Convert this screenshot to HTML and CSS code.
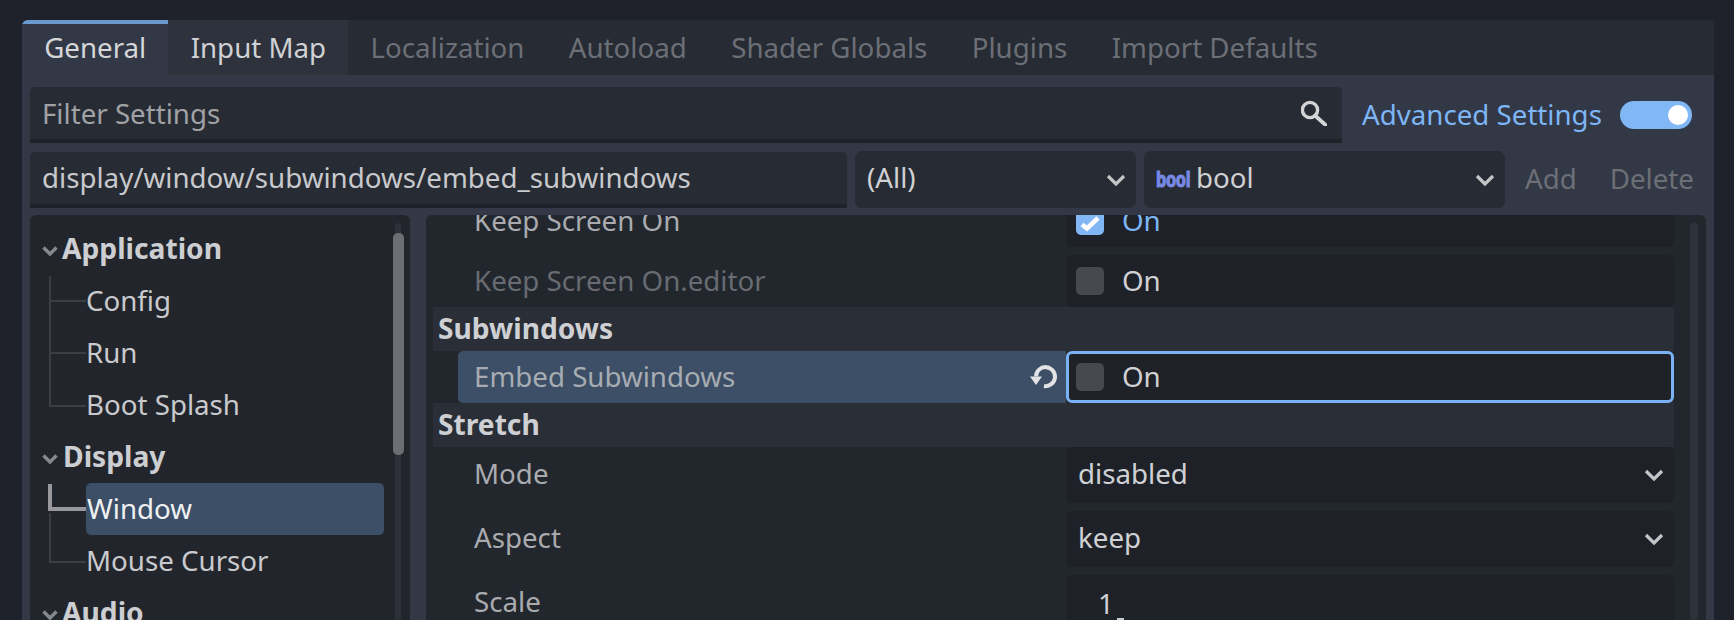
FILE: index.html
```html
<!DOCTYPE html>
<html lang="en">
<head>
<meta charset="utf-8">
<title>Project Settings</title>
<link rel="stylesheet" href="styles.css">
</head>
<body>
<main class="panel">
  <nav class="tabs">
    <span class="tab active">General</span>
    <span class="tab open">Input Map</span>
    <span class="tab">Localization</span>
    <span class="tab">Autoload</span>
    <span class="tab">Shader Globals</span>
    <span class="tab">Plugins</span>
    <span class="tab">Import Defaults</span>
  </nav>
  <div class="body">
    <div class="bar bar-filter">
      <div class="field filter">
        <span class="placeholder">Filter Settings</span>
        <svg class="search" viewBox="0 0 26 26"><circle cx="9" cy="10" r="7.6" fill="none" stroke="#d4d4d4" stroke-width="3.4"/><path d="M14 15.500l10.500 9.500" stroke="#d4d4d4" stroke-width="3.8" stroke-linecap="round"/></svg>
      </div>
      <span class="advanced">Advanced Settings</span>
      <span class="toggle"><span class="knob"></span></span>
    </div>
    <div class="bar bar-path">
      <div class="field path"><span class="path-text">display/window/subwindows/embed_subwindows</span></div>
      <div class="select all"><span class="select-text">(All)</span><svg class="chev" viewBox="0 0 20 12"><path d="M2 2l8 8 8-8" fill="none" stroke="#c4c5c7" stroke-width="3.2"/></svg></div>
      <div class="select type"><span class="type-slot"><span class="type-icon">bool</span></span><span class="type-name select-text">bool</span><svg class="chev" viewBox="0 0 20 12"><path d="M2 2l8 8 8-8" fill="none" stroke="#c4c5c7" stroke-width="3.2"/></svg></div>
      <span class="action add">Add</span>
      <span class="action">Delete</span>
    </div>
    <div class="main">
      <aside class="tree">
        <div class="node head"><svg class="arrow" viewBox="0 0 16 10"><path d="M1.5 1.5L8 8l6.5-6.5" fill="none" stroke="#85888d" stroke-width="3.4"/></svg><b>Application</b></div>
        <div class="node"><span class="branch mid"></span><span class="leaf">Config</span></div>
        <div class="node"><span class="branch mid"></span><span class="leaf">Run</span></div>
        <div class="node"><span class="branch end"></span><span class="leaf">Boot Splash</span></div>
        <div class="node head"><svg class="arrow" viewBox="0 0 16 10"><path d="M1.5 1.5L8 8l6.5-6.5" fill="none" stroke="#85888d" stroke-width="3.4"/></svg><b class="nudge">Display</b></div>
        <div class="node"><span class="branch sel"></span><span class="leaf selected">Window</span></div>
        <div class="node"><span class="branch end"></span><span class="leaf">Mouse Cursor</span></div>
        <div class="node head"><svg class="arrow" viewBox="0 0 16 10"><path d="M1.5 1.5L8 8l6.5-6.5" fill="none" stroke="#85888d" stroke-width="3.4"/></svg><b>Audio</b></div>
        <div class="scroll tree-scroll"><span class="grab"></span></div>
      </aside>
      <section class="props">
        <div class="prop first">
          <span class="label">Keep Screen On</span>
          <div class="value check"><span class="box on"><svg viewBox="0 0 28 28"><path d="M6 17.500l5 4 11-10.500" fill="none" stroke="#fff" stroke-width="4.500"/></svg></span><span class="on-text blue">On</span></div>
        </div>
        <div class="prop">
          <span class="label dim">Keep Screen On.editor</span>
          <div class="value check"><span class="box"></span><span class="on-text">On</span></div>
        </div>
        <h3 class="section">Subwindows</h3>
        <div class="prop focus">
          <div class="label hl"><span class="hl-text">Embed Subwindows</span><svg class="reset" viewBox="0 0 28 26"><path d="M6 12.500A9.500 9.500 0 1 1 14 22" fill="none" stroke="#e2e3e4" stroke-width="4"/><path d="M0 12.500H12L6 21z" fill="#e2e3e4"/></svg></div>
          <div class="value check ring"><span class="box"></span><span class="on-text">On</span></div>
        </div>
        <h3 class="section">Stretch</h3>
        <div class="prop tall">
          <span class="label">Mode</span>
          <div class="value drop"><span class="select-text">disabled</span><svg class="chev" viewBox="0 0 20 12"><path d="M2 2l8 8 8-8" fill="none" stroke="#c4c5c7" stroke-width="3.2"/></svg></div>
        </div>
        <div class="prop tall">
          <span class="label">Aspect</span>
          <div class="value drop"><span class="select-text">keep</span><svg class="chev" viewBox="0 0 20 12"><path d="M2 2l8 8 8-8" fill="none" stroke="#c4c5c7" stroke-width="3.2"/></svg></div>
        </div>
        <div class="prop">
          <span class="label low">Scale</span>
          <div class="value number"><span>1</span><span class="tick"></span></div>
        </div>
        <div class="scroll props-scroll"></div>
      </section>
    </div>
  </div>
</main>
</body>
</html>
```
FILE: styles.css
```css
* { box-sizing: border-box; }
html, body { height: 100%; }
body {
  margin: 0;
  height: 620px;
  overflow: hidden;
  padding: 20px 20px 0 22px;
  background: #1f222a;
  font-family: "Noto Sans", sans-serif;
  font-size: 27.7px;
  color: #d0d1d4;
}
.panel {
  height: 600px;
  display: flex;
  flex-direction: column;
  background: #323845;
  border-radius: 6px 6px 0 0;
  overflow: hidden;
}
.tabs {
  display: flex;
  height: 55px;
  flex: none;
  background: #272b34;
}
.tab {
  padding: 4px 22.2px 0;
  line-height: 47px;
  color: #6c6f76;
  white-space: nowrap;
}
.tab.active {
  background: #323845;
  border-top: 4px solid #6999cf;
  padding-top: 0;
  color: #d5d6d9;
}
.tab.open { background: #2d323d; color: #d0d1d4; }
.body {
  flex: 1;
  min-height: 0;
  display: flex;
  flex-direction: column;
  padding: 12px 8px 0;
}
.bar { display: flex; align-items: center; flex: none; }
.bar-filter { height: 56px; }
.bar-path { height: 57px; margin-top: 8px; gap: 8px; }
.field {
  height: 56px;
  background: #272b33;
  border-bottom: 4px solid #1f2229;
  border-radius: 5px 5px 0 0;
  display: flex;
  align-items: center;
  padding: 0 12px;
}
.filter { width: 1312px; justify-content: space-between; }
.placeholder { color: #a0a2a6; }
.search { width: 26px; height: 26px; margin-right: 3px; }
.advanced { margin-left: 20px; padding-bottom: 2px; color: #7db5f6; white-space: nowrap; }
.toggle {
  margin-left: 18px;
  width: 72px;
  height: 28px;
  background: #82b7f6;
  border-radius: 14px;
  display: flex;
  align-items: center;
  justify-content: flex-end;
  padding-right: 4px;
}
.knob { width: 20px; height: 20px; border-radius: 50%; background: #fff; }
.path { width: 817px; color: #c8c9cc; white-space: nowrap; }
.path-text { padding-bottom: 2px; }
.select {
  height: 57px;
  background: #272b33;
  border-radius: 7px;
  display: flex;
  align-items: center;
  padding: 0 10px 0 12px;
}
.select-text { padding-bottom: 5px; }
.all { width: 281px; justify-content: space-between; }
.type { width: 361px; }
.chev { width: 20px; height: 12px; flex: none; }
.type .chev { margin-left: auto; }
.type-slot { width: 32px; margin-right: 8px; margin-bottom: 5px; flex: none; line-height: 1; white-space: nowrap; }
.type-icon {
  display: inline-block;
  font-size: 21px;
  font-weight: 700;
  letter-spacing: -0.5px;
  color: #7789e4;
  -webkit-text-stroke: 1.1px #7789e4;
  transform: scaleX(0.78);
  transform-origin: left center;
}
.type-name { color: #cfd0d3; }
.action { color: #6c6f76; margin-left: 12px; padding-bottom: 3px; }
.action.add { margin-left: 12px; margin-right: 13px; }
.main {
  flex: 1;
  min-height: 0;
  display: flex;
  gap: 16px;
  margin-top: 7px;
}
.tree, .props {
  position: relative;
  overflow: hidden;
  border-radius: 6px 6px 0 0;
}
.tree {
  width: 380px;
  flex: none;
  background: #22262c;
  padding-top: 9px;
}
.node {
  height: 52px;
  display: flex;
  align-items: center;
  white-space: nowrap;
  padding-left: 12px;
}
.head b { font-size: 28.2px; font-weight: 700; color: #cdced2; padding-bottom: 4px; }
.head .nudge { margin-left: 1px; }
.arrow { width: 16px; height: 10px; margin-right: 4px; flex: none; margin-top: 2px; }
.branch {
  width: 37px;
  height: 52px;
  margin-left: 7px;
  flex: none;
  --line: #3a3e45;
  background:
    linear-gradient(var(--line), var(--line)) 0 0 / 2px 100% no-repeat,
    linear-gradient(var(--line), var(--line)) 0 24px / 100% 2px no-repeat;
}
.branch.end {
  background:
    linear-gradient(var(--line), var(--line)) 0 0 / 2px 26px no-repeat,
    linear-gradient(var(--line), var(--line)) 0 25px / 100% 2px no-repeat;
}
.branch.sel {
  margin-left: 6px;
  width: 38px;
  background:
    linear-gradient(#99999d, #99999d) 0 0 / 4px 27px no-repeat,
    linear-gradient(#99999d, #99999d) 0 23px / 100% 4px no-repeat,
    linear-gradient(var(--line), var(--line)) 1px 29px / 2px 100% no-repeat;
}
.leaf { color: #c9cacd; padding-bottom: 4px; }
.selected {
  width: 298px;
  height: 52px;
  line-height: 51px;
  padding-bottom: 0;
  margin-top: -2px;
  background: #3c4f66;
  border-radius: 5px;
  color: #f0f1f2;
  padding-left: 1px;
}
.scroll {
  position: absolute;
  background: #2d3038;
  border-radius: 3px;
}
.tree-scroll { left: 365px; top: 8px; bottom: 0; width: 6px; }
.grab {
  display: block;
  position: absolute;
  left: -2px;
  top: 10px;
  width: 11px;
  height: 222px;
  border-radius: 5px;
  background: #6b6e73;
}
.props {
  width: 1280px;
  flex: none;
  background: #22262d;
  padding: 0 32px 0 7px;
}
.props-scroll { right: 8px; top: 8px; bottom: 0; width: 8px; background: #2e323b; }
.prop {
  display: flex;
  height: 52px;
  margin-bottom: 8px;
  color: #a9abaf;
}
.prop.first { margin-top: -20px; }
.label {
  width: 633px;
  padding-left: 41px;
  line-height: 50px;
  white-space: nowrap;
}
.label.low { line-height: 52px; }
.dim { color: #686b71; }
.value {
  position: relative;
  width: 608px;
  background: #1e2128;
  border-radius: 6px;
  display: flex;
  align-items: center;
  color: #d0d1d4;
  padding: 0 10px;
}
.box {
  width: 28px;
  height: 28px;
  border-radius: 5px;
  background: #46494f;
  flex: none;
  display: block;
}
.box svg { display: block; width: 28px; height: 28px; }
.box.on { background: #82b7f6; }
.on-text { margin-left: 18px; padding-bottom: 2px; }
.blue { color: #7db5f6; }
.section {
  margin: -8px 0 0;
  height: 44px;
  line-height: 42px;
  background: #2a2e37;
  font-size: 28.2px;
  font-weight: 700;
  color: #cfd0d3;
  padding-left: 5px;
}
.prop.focus { margin-bottom: 0; }
.hl {
  display: flex;
  align-items: center;
  justify-content: space-between;
  margin-left: 25px;
  width: 608px;
  padding: 0 8px 0 16px;
  background: #3c4f66;
  border-radius: 5px 0 0 5px;
  color: #a7acb3;
}
.hl-text { padding-bottom: 2px; }
.reset { width: 28px; height: 26px; }
.ring {
  border: 3px solid #79b2f5;
  border-radius: 6px;
  padding: 0 7px;
}
.focus + .section { margin-top: 0; }
.drop { height: 56px; justify-content: space-between; padding-left: 12px; }
.prop.tall { height: 56px; }
.prop.tall .label { line-height: 52px; }
.number { height: 60px; padding-left: 32px; padding-bottom: 4px; }
.tick {
  position: absolute;
  left: 51px;
  top: 43px;
  width: 7px;
  height: 3px;
  background: #c9cacd;
}
```
